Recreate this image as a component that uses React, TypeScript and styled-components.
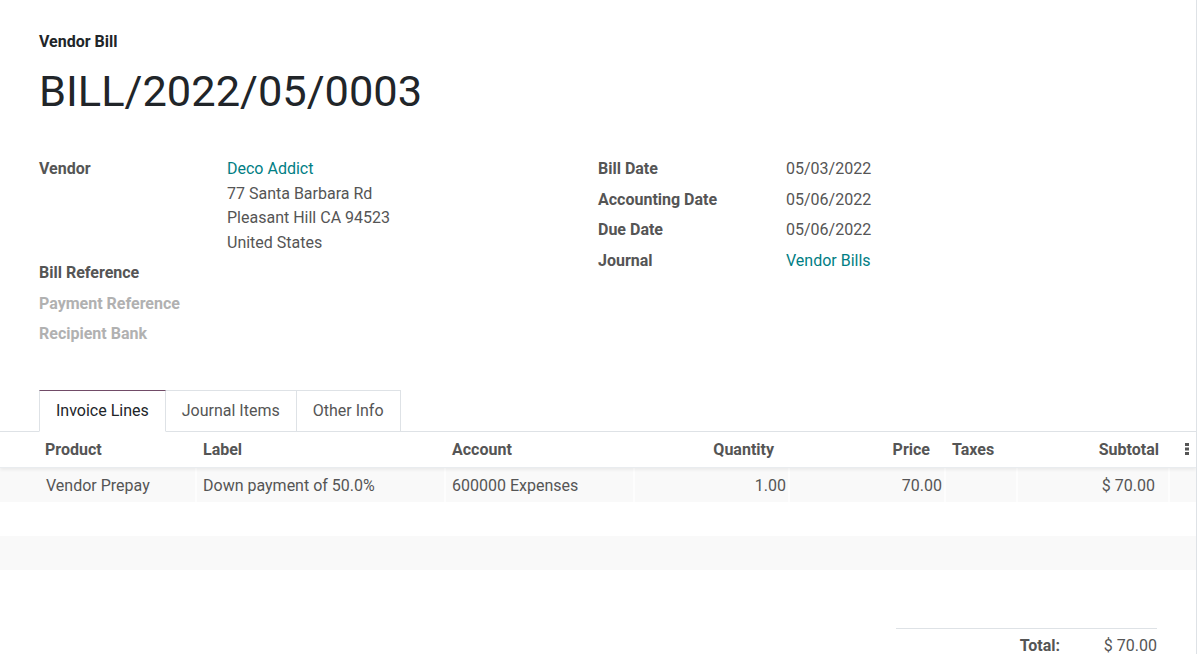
import React from "react";
import styled, { createGlobalStyle } from "styled-components";

const Global = createGlobalStyle`
  html, body { margin: 0; padding: 0; background: #fff; }
  body { font-family: Roboto, "Noto Sans", Arial, sans-serif; color: #4c4c4c; }
  * { box-sizing: border-box; }
`;

const Sheet = styled.div`
  width: 1197px;
  height: 654px;
  border-right: 1px solid #dee2e6;
  overflow: hidden;
  background: #fff;
`;

const Head = styled.div`
  padding: 32px 0 0 39px;
`;

const Kind = styled.div`
  font-size: 16px;
  font-weight: 700;
  line-height: 20px;
  color: #212529;
`;

const Title = styled.h1`
  margin: 10px 0 0;
  font-size: 43.4px;
  font-weight: 400;
  line-height: 60px;
  color: #212529;
`;

const Groups = styled.div`
  display: grid;
  grid-template-columns: 559px 1fr;
  padding: 32px 0 0 39px;
`;

const Group = styled.div`
  display: grid;
  grid-template-columns: 188px 1fr;
  align-content: start;
`;

const Label = styled.div<{ $muted?: boolean }>`
  font-size: 16px;
  font-weight: 700;
  line-height: 24.5px;
  padding: 3px 0;
  color: ${(p) => (p.$muted ? "#b1b1b1" : "#555")};
`;

const Value = styled.div<{ $link?: boolean }>`
  font-size: 16px;
  line-height: 24.5px;
  padding: 3px 0;
  color: ${(p) => (p.$link ? "#017e84" : "#555")};
`;

const Line = styled.div<{ $link?: boolean }>`
  color: ${(p) => (p.$link ? "#017e84" : "#555")};
`;

const Tabs = styled.div`
  display: flex;
  margin-top: 40px;
  padding-left: 39px;
  border-bottom: 1px solid #dee2e6;
  height: 42px;
`;

const Tab = styled.div<{ $active?: boolean }>`
  height: 42px;
  padding: 0 16px;
  display: flex;
  align-items: center;
  font-size: 16px;
  color: ${(p) => (p.$active ? "#212529" : "#555")};
  border: 1px solid #dee2e6;
  border-left-width: ${(p) => (p.$active ? "1px" : "0")};
  border-top-color: ${(p) => (p.$active ? "#714b67" : "#dee2e6")};
  border-bottom-color: ${(p) => (p.$active ? "#fff" : "#dee2e6")};
  background: #fff;
`;

const cols = "197px 249px 189px 155px 156px 72px 152px 1fr";

const HeadRow = styled.div`
  display: grid;
  grid-template-columns: ${cols};
  height: 36px;
  align-items: center;
  border-bottom: 1px solid #e9ecef;
  box-shadow: 0 2px 3px rgba(0, 0, 0, 0.06);
  position: relative;
`;

const Th = styled.div<{ $right?: boolean; $pr?: number }>`
  font-size: 16px;
  font-weight: 700;
  color: #555;
  text-align: ${(p) => (p.$right ? "right" : "left")};
  padding: 0 ${(p) => p.$pr ?? 6}px 0 6px;
  white-space: nowrap;
`;

const Row = styled.div<{ $shade?: boolean }>`
  display: grid;
  grid-template-columns: ${cols};
  height: 34px;
  align-items: stretch;
  background: ${(p) => (p.$shade ? "#f9f9f9" : "#fff")};
`;

const Td = styled.div<{ $right?: boolean; $pr?: number }>`
  font-size: 16px;
  color: #555;
  display: flex;
  align-items: center;
  justify-content: ${(p) => (p.$right ? "flex-end" : "flex-start")};
  padding: 1px ${(p) => p.$pr ?? 6}px 0 6px;
  border-right: 2px solid #fdfdfd;
  &:last-child { border-right: 0; }
`;

const Kebab = styled.div`
  display: flex;
  justify-content: flex-end;
  padding-right: 7px;
`;

const Footer = styled.div`
  display: flex;
  justify-content: flex-end;
  padding: 58px 39px 0 0;
`;

const Totals = styled.div`
  width: 261px;
  border-top: 1px solid #dee2e6;
  display: grid;
  grid-template-columns: 164px 1fr;
  padding-top: 7px;
`;

const TotLabel = styled.div`
  font-size: 16px;
  font-weight: 700;
  color: #555;
  text-align: right;
`;

const TotValue = styled.div`
  font-size: 16px;
  color: #555;
  text-align: right;
`;

export default function App() {
  return (
    <>
      <Global />
      <Sheet>
        <Head>
          <Kind>Vendor Bill</Kind>
          <Title>BILL/2022/05/0003</Title>
        </Head>
        <Groups>
          <Group>
            <Label>Vendor</Label>
            <Value>
              <Line $link>Deco Addict</Line>
              <Line>77 Santa Barbara Rd</Line>
              <Line>Pleasant Hill CA 94523</Line>
              <Line>United States</Line>
            </Value>
            <Label>Bill Reference</Label>
            <Value />
            <Label $muted>Payment Reference</Label>
            <Value />
            <Label $muted>Recipient Bank</Label>
            <Value />
          </Group>
          <Group>
            <Label>Bill Date</Label>
            <Value>05/03/2022</Value>
            <Label>Accounting Date</Label>
            <Value>05/06/2022</Value>
            <Label>Due Date</Label>
            <Value>05/06/2022</Value>
            <Label>Journal</Label>
            <Value $link>Vendor Bills</Value>
          </Group>
        </Groups>
        <Tabs>
          <Tab $active>Invoice Lines</Tab>
          <Tab>Journal Items</Tab>
          <Tab>Other Info</Tab>
        </Tabs>
        <HeadRow>
          <Th style={{ paddingLeft: 45 }}>Product</Th>
          <Th>Label</Th>
          <Th>Account</Th>
          <Th $right $pr={16}>Quantity</Th>
          <Th $right $pr={16}>Price</Th>
          <Th>Taxes</Th>
          <Th $right $pr={11}>Subtotal</Th>
          <Kebab>
            <svg width="4" height="12" viewBox="0 0 4 12">
              <rect x="0" y="0" width="4" height="3" fill="#555" />
              <rect x="0" y="4.5" width="4" height="3" fill="#555" />
              <rect x="0" y="9" width="4" height="3" fill="#555" />
            </svg>
          </Kebab>
        </HeadRow>
        <Row $shade>
          <Td style={{ paddingLeft: 46 }}>Vendor Prepay</Td>
          <Td>Down payment of 50.0%</Td>
          <Td>600000 Expenses</Td>
          <Td $right $pr={2}>1.00</Td>
          <Td $right $pr={2}>70.00</Td>
          <Td />
          <Td $right $pr={13}>$ 70.00</Td>
          <Td />
        </Row>
        <Row />
        <Row $shade />
        <Footer>
          <Totals>
            <TotLabel>Total:</TotLabel>
            <TotValue>$ 70.00</TotValue>
          </Totals>
        </Footer>
      </Sheet>
    </>
  );
}
